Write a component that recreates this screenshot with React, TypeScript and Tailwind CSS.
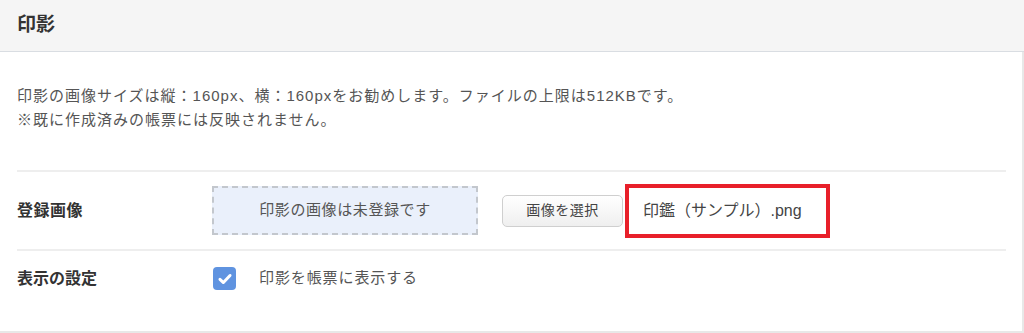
import React from "react";

const font = {
  fontFamily: '"Liberation Sans", "Noto Sans CJK JP", sans-serif',
};

const Panel = () => {
  return (
    <div className="w-[1024px] h-[333px] bg-white flex flex-col" style={font}>
      {/* Header */}
      <div className="h-[52px] shrink-0 bg-[#f5f5f5] border-b border-[#d9dde2] px-[17px] flex items-center">
        <h2 className="text-[19px] font-bold text-[#333]">印影</h2>
      </div>

      {/* Body */}
      <div className="flex-1 border-r-2 border-b-2 border-[#e8e8e8] pl-[17px] pr-[16px] flex flex-col">
        <div className="pt-[32px] pb-[38px] text-[15px] leading-[24px] tracking-[1px] text-[#555]">
          <p>
            印影の画像サイズは縦：160px、横：160pxをお勧めします。ファイルの上限は512KBです。
          </p>
          <p>※既に作成済みの帳票には反映されません。</p>
        </div>

        {/* Registered image */}
        <div className="h-[79px] border-t-2 border-[#eeeeee] flex items-center">
          <div className="w-[195px] text-[16px] tracking-[0.5px] font-bold text-[#333]">登録画像</div>
          <div className="w-[266px] h-[49px] border-2 border-dashed border-[#c3c7cd] bg-[#eaf0fb] flex items-center justify-center text-[15px] tracking-[0.6px] text-[#555]">
            印影の画像は未登録です
          </div>
          <button className="ml-[24px] w-[121px] h-[32px] rounded-[5px] border border-[#cfcfcf] bg-gradient-to-b from-white to-[#efefef] text-[14px] tracking-[0.5px] text-[#444]">
            画像を選択
          </button>
          <div className="ml-[2px] w-[205px] h-[54px] border-4 border-[#e8202a] flex items-center pl-[14px] text-[16px] text-[#444]">
            印鑑（サンプル）.png
          </div>
        </div>

        {/* Display setting */}
        <div className="flex-1 border-t-2 border-[#eeeeee] flex items-start pt-[16px]">
          <div className="w-[196px] text-[16px] font-bold text-[#333] leading-[24px]">表示の設定</div>
          <div className="flex items-center">
            <span className="w-[23px] h-[23px] rounded-[4px] bg-[#5f93e0] flex items-center justify-center">
              <svg width="16" height="16" viewBox="0 0 14 14" fill="none">
                <path
                  d="M2.6 7.3 L5.6 10.1 L11.4 3.9"
                  stroke="white"
                  strokeWidth="2.6"
                  strokeLinecap="round"
                  strokeLinejoin="round"
                />
              </svg>
            </span>
            <span className="ml-[23px] text-[15px] tracking-[0.9px] text-[#555]">
              印影を帳票に表示する
            </span>
          </div>
        </div>
      </div>
    </div>
  );
};

export default function App() {
  return <Panel />;
}
